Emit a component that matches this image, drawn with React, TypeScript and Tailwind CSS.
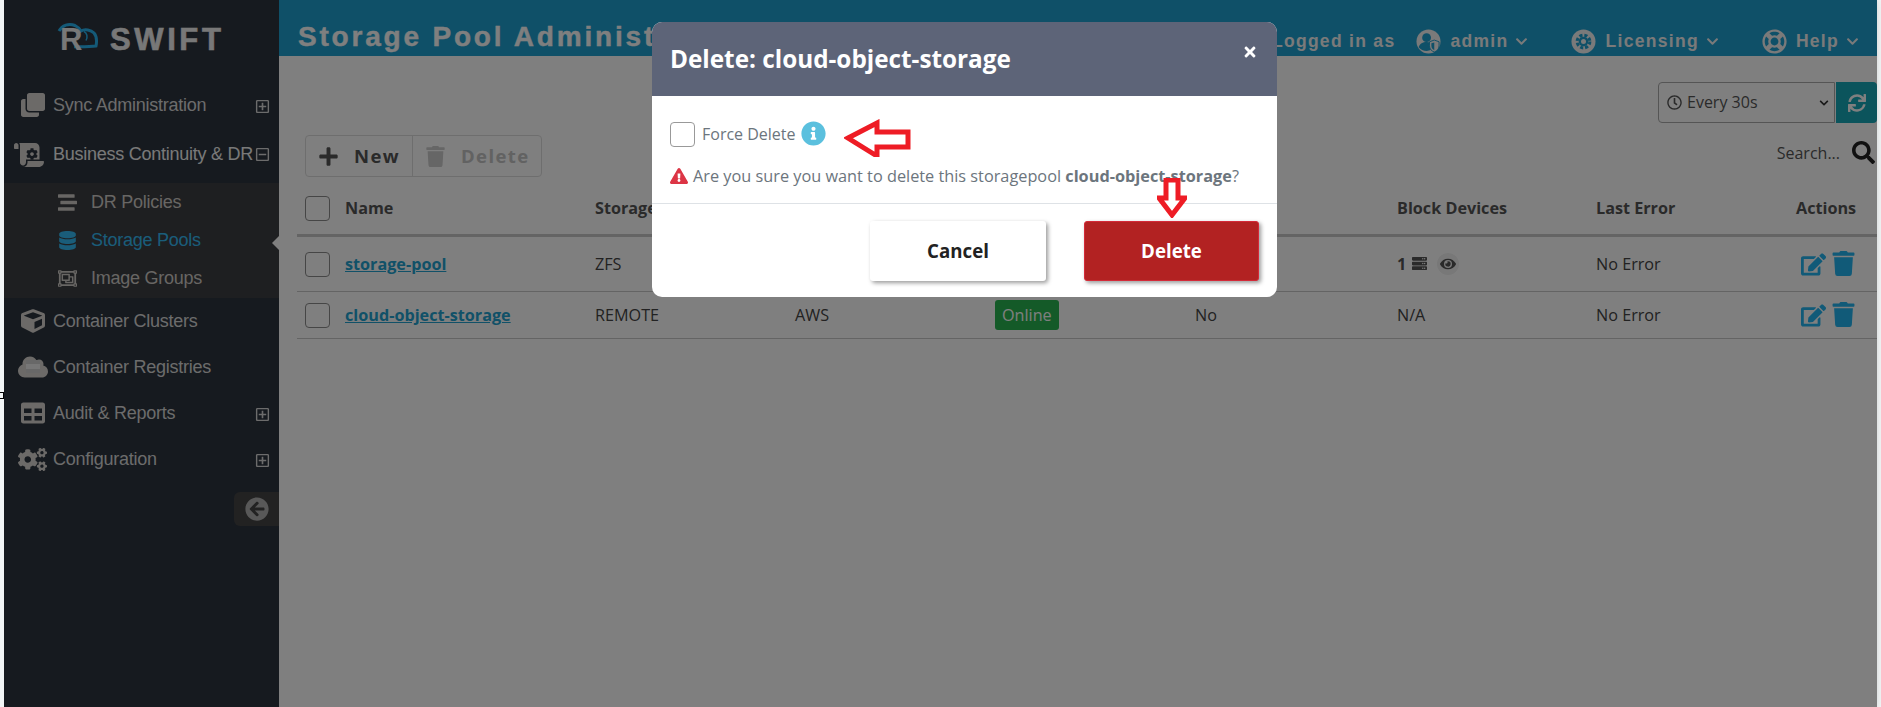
import React from "react";
import {
  FaClone, FaScroll, FaCog, FaStream, FaDatabase, FaRegObjectGroup, FaCube, FaCloud, FaTable, FaCogs,
  FaRegPlusSquare, FaRegMinusSquare, FaArrowCircleLeft, FaChevronDown, FaRegLifeRing, FaSync, FaSearch,
  FaRegClock, FaPlus, FaTrash, FaEdit, FaEye, FaServer, FaInfoCircle, FaExclamationTriangle, FaTimes,
} from "react-icons/fa";

function AdminIcon() {
  return (
    <svg viewBox="0 0 26 26" className="w-[25px] h-[25px]">
      <circle cx="13" cy="13" r="12.5" fill="#f4f4f4" />
      <circle cx="11" cy="9" r="4.6" fill="#1ea0d0" />
      <path d="M2.8 19c1-4 4.4-5.6 8.2-5.6 1.6 0 3 .3 4.2.9v7.6c-1 .5-2.400.9-4 .9-3.500 0-6.500-1.500-8.400-3.800z" fill="#1ea0d0" />
      <path d="M19 11.500l5 1.800v4.200c0 3.400-2.300 5.400-5 6.500-2.700-1.100-5-3.100-5-6.500v-4.200z" fill="#f4f4f4" stroke="#1ea0d0" strokeWidth="1" />
      <path d="M19 14v8c-1.800-.9-3-2.300-3-4.500v-2.600z" fill="#1ea0d0" />
    </svg>
  );
}

function LicensingIcon() {
  return (
    <svg viewBox="0 0 26 26" className="w-[25px] h-[25px]">
      <circle cx="13" cy="13" r="12.500" fill="#f4f4f4" />
      <circle cx="13" cy="13" r="6.600" fill="none" stroke="#1ea0d0" strokeWidth="3.200" strokeDasharray="3.200 2" />
      <circle cx="13" cy="13" r="5" fill="#1ea0d0" />
      <circle cx="13" cy="13" r="2.600" fill="#f4f4f4" />
    </svg>
  );
}

function LogoCloud() {
  return (
    <svg viewBox="0 0 44 28" className="w-[44px] h-[28px]" fill="none">
      <path d="M3 9C6 3 13 1 19 3.500 22 5 24 7 25 9c4-2.500 10-1 13 2 3 3.500 3 8 2 13-6 1-14 .8-22 .8" stroke="#28b4f0" strokeWidth="3" />
      <path d="M28 9.500c3 1.500 4 5.500 2 9" stroke="#28b4f0" strokeWidth="1.500" />
    </svg>
  );
}

const navTop = [
  { label: "Sync Administration", icon: <FaClone className="text-[24px]" />, tree: "plus", h: "h-[46px]" },
  { label: "Business Continuity & DR", icon: <span className="relative flex ml-[-3px]"><FaScroll className="text-[30px] ml-[-4px]" /><FaCog className="absolute left-[8px] top-[8px] text-[12px] text-[#2c343e]" /></span>, tree: "minus", h: "h-[55px] pb-[2px]", active: true },
];
const navSub = [
  { label: "DR Policies", icon: <FaStream className="text-[19px]" /> },
  { label: "Storage Pools", icon: <FaDatabase className="text-[19px]" />, active: true },
  { label: "Image Groups", icon: <FaRegObjectGroup className="text-[19px]" /> },
];
const navBottom = [
  { label: "Container Clusters", icon: <FaCube className="text-[24px]" />, tree: "" },
  { label: "Container Registries", icon: <span className="relative flex"><FaCloud className="text-[30px] ml-[-3px]" /><span className="absolute left-[5px] top-[8px] w-[14px] h-[13px] bg-[#eeeeee] border-y-[4px] border-[#d0d0d0]" /></span>, tree: "" },
  { label: "Audit & Reports", icon: <FaTable className="text-[24px]" />, tree: "plus" },
  { label: "Configuration", icon: <FaCogs className="text-[29px] ml-[-3px]" />, tree: "plus" },
];

function NavRow({ item, h }: { item: any; h: string }) {
  return (
    <div className={`flex items-center ${h} pl-[17px] pr-[9px] ${item.active ? "text-[#f2f2f2]" : "text-[#d8d8d8]"}`}>
      <span className="w-[32px] flex items-center shrink-0 text-[#d8d4d0]">{item.icon}</span>
      <span className="text-[18px] tracking-[-0.25px] whitespace-nowrap flex-1">{item.label}</span>
      {item.tree === "plus" && <FaRegPlusSquare className="text-[15px] text-[#d8d8d8] mt-[2px]" />}
      {item.tree === "minus" && <FaRegMinusSquare className="text-[15px] text-[#d8d8d8]" />}
    </div>
  );
}

function Sidebar() {
  return (
    <aside className="relative w-[275px] shrink-0 bg-[#2c343e] font-['Liberation_Sans',sans-serif]">
      <div className="h-[82px] flex items-start pt-[20px] pl-[52px]">
        <div className="flex items-start text-[#f0f0f0] font-bold">
          <span className="relative flex items-center h-[30px] w-[48px]">
            <span className="absolute left-[0px] top-[2px]"><LogoCloud /></span>
            <span className="relative text-[31px] leading-[30px] mt-[9px] ml-[4px]">R</span>
          </span>
          <span className="ml-[6px] mt-[3px] text-[31px] leading-[34px] tracking-[3.600px] [-webkit-text-stroke:0.6px_#f0f0f0]">SWIFT</span>
        </div>
      </div>
      {navTop.map((n) => <NavRow key={n.label} item={n} h={n.h} />)}
      <div className="bg-[#3c3e42] pb-[1px]">
        {navSub.map((n) => (
          <div key={n.label} className={`flex items-center h-[38px] pl-[54px] ${n.active ? "text-[#34bbf4]" : "text-[#d0ccc8]"}`}>
            <span className="w-[33px] flex shrink-0">{n.icon}</span>
            <span className="text-[18px] tracking-[-0.25px]">{n.label}</span>
          </div>
        ))}
      </div>
      {navBottom.map((n) => <NavRow key={n.label} item={n} h="h-[46px]" />)}
      <div className="flex justify-end mt-[10px]">
        <div className="w-[45px] h-[34px] bg-[#444444] rounded-l-[6px] flex items-center pl-[11px]">
          <FaArrowCircleLeft className="text-[24px] text-[#b0b0b0]" />
        </div>
      </div>
      <span className="absolute right-0 top-[236px] w-0 h-0 border-y-[7px] border-y-transparent border-r-[7px] border-r-white" />
    </aside>
  );
}

function HeaderLink({ icon, label, className }: { icon: React.ReactNode; label: string; className: string }) {
  return (
    <div className={`flex items-center ${className}`}>
      {icon}
      <span className="ml-[9px] tracking-[1.300px]">{label}</span>
      <FaChevronDown className="ml-[7px] text-[13px]" />
    </div>
  );
}

function TopBar() {
  return (
    <header className="h-[56px] bg-[#1ea0d0] flex items-end pb-[3px] pl-[19px] pr-[18px] font-['Liberation_Sans',sans-serif] font-bold text-white">
      <h1 className="text-[28px] leading-[40px] tracking-[2.800px] whitespace-nowrap mb-[-4px] [-webkit-text-stroke:0.4px_#ffffff]">Storage Pool Administration</h1>
      <div className="ml-auto flex items-center h-[34px] mb-[-5px] text-[17.5px] text-[#f4f4f4]">
        <span className="tracking-[1.300px] mr-[21px]">Logged in as</span>
        <HeaderLink icon={<AdminIcon />} label="admin" className="mr-[43px]" />
        <HeaderLink icon={<LicensingIcon />} label="Licensing" className="mr-[43px]" />
        <HeaderLink icon={<FaRegLifeRing className="text-[25px]" />} label="Help" className="" />
      </div>
    </header>
  );
}

const grid = "grid grid-cols-[298px_200px_200px_200px_202px_199px_200px_1fr] items-center";

function Box() {
  return <span className="w-[25px] h-[25px] border border-[#8c8c8c] rounded-[4px] bg-white shrink-0" />;
}

function RowActions() {
  return (
    <div className="flex items-center text-[#22b4f0] pl-[5px] gap-[5px]">
      <FaEdit className="text-[25px]" />
      <FaTrash className="text-[25px] mb-[2px]" />
    </div>
  );
}

function Table() {
  return (
    <div className="ml-[18px] mt-[5px] text-[16.2px] text-[#444444]">
      <div className={`${grid} h-[55px] pt-[1px] border-b-[3px] border-[#c8c8c8] font-bold text-[#555555]`}>
        <div className="flex items-center pl-[8px] gap-[15px]"><Box />Name</div>
        <div>Storage Type</div>
        <div />
        <div />
        <div />
        <div>Block Devices</div>
        <div>Last Error</div>
        <div>Actions</div>
      </div>
      <div className={`${grid} h-[55px] border-b border-[#c8c8c8]`}>
        <div className="flex items-center pl-[8px] gap-[15px]"><Box /><a className="font-bold underline text-[#22a2d0]">storage-pool</a></div>
        <div>ZFS</div>
        <div />
        <div />
        <div />
        <div className="flex items-center font-bold text-[#555555]">
          1<FaServer className="ml-[6px] text-[15px]" />
          <span className="ml-[10px] w-[22px] h-[22px] rounded-full flex items-center justify-center bg-[#f0f0f0]"><FaEye className="text-[16px]" /></span>
        </div>
        <div>No Error</div>
        <RowActions />
      </div>
      <div className={`${grid} h-[47px] border-b border-[#c8c8c8]`}>
        <div className="flex items-center pl-[8px] gap-[15px]"><Box /><a className="font-bold underline text-[#22a2d0]">cloud-object-storage</a></div>
        <div>REMOTE</div>
        <div>AWS</div>
        <div><span className="inline-block px-[7px] py-[3px] rounded-[3px] bg-[#28b451] text-white">Online</span></div>
        <div>No</div>
        <div>N/A</div>
        <div>No Error</div>
        <RowActions />
      </div>
    </div>
  );
}

function Main() {
  return (
    <main className="flex-1 min-w-0 bg-white shadow-[-4px_0_10px_rgba(0,0,0,0.35)] font-['Open_Sans',sans-serif]">
      <TopBar />
      <div className="flex justify-end pt-[26px]">
        <div className="w-[177px] h-[41px] border border-[#aaaaaa] rounded-l-[4px] flex items-center pl-[8px] pr-[5px] text-[16px] text-[#555555]">
          <FaRegClock className="text-[15px]" />
          <span className="ml-[5px] mb-[1px]">Every 30s</span>
          <FaChevronDown className="ml-auto text-[10px] text-[#333333]" />
        </div>
        <div className="w-[41px] h-[41px] ml-px bg-[#16a8b8] rounded-r-[4px] flex items-center justify-center text-white">
          <FaSync className="text-[18px]" />
        </div>
      </div>
      <div className="flex items-center justify-between mt-[12px] pl-[26px]">
        <div className="flex h-[42px] border border-[#dddddd] rounded-[4px] text-[18.5px] font-bold tracking-[1.400px]">
          <div className="w-[107px] flex items-center pl-[12px] text-[#555555] border-r border-[#dddddd]">
            <FaPlus className="text-[21px]" /><span className="ml-[15px]">New</span>
          </div>
          <div className="w-[128px] flex items-center pl-[12px] text-[#c4c4c4]">
            <FaTrash className="text-[21px] text-[#cccccc]" /><span className="ml-[15px]">Delete</span>
          </div>
        </div>
        <div className="flex items-center mt-[-7px]">
          <span className="text-[16px] text-[#555555]">Search...</span>
          <FaSearch className="ml-[12px] mr-[2px] text-[23px] text-[#222222]" />
        </div>
      </div>
      <Table />
    </main>
  );
}

function RedArrows() {
  return (
    <>
      <svg viewBox="0 0 68 38" className="absolute left-[844px] top-[119px] w-[68px] h-[38px]" fill="none">
        <path d="M4 19L33 4v9h31v15H33v9z" stroke="#ee1c25" strokeWidth="5" fill="white" />
      </svg>
      <svg viewBox="0 0 30 40" className="absolute left-[1157px] top-[178px] w-[30px] h-[40px]" fill="none">
        <path d="M9 2h12v18h7L15 37 2 20h7z" stroke="#ee1c25" strokeWidth="5" fill="white" />
      </svg>
    </>
  );
}

function Modal() {
  return (
    <div className="absolute left-[652px] top-[22px] w-[625px] h-[275px] bg-white rounded-[10px] overflow-hidden font-['Open_Sans',sans-serif]">
      <div className="h-[74px] bg-[#5d6478] flex items-center justify-between pl-[18px] pr-[19px] text-white">
        <h2 className="text-[24.3px] font-bold leading-none">Delete: cloud-object-storage</h2>
        <FaTimes className="text-[16px] mb-[15px]" />
      </div>
      <div className="h-[108px] border-b border-[#dee2e6] pt-[26px] pl-[18px] text-[16px] text-[#6c757d]">
        <div className="flex items-center h-[25px]">
          <span className="w-[25px] h-[25px] border border-[#999999] rounded-[4px] shrink-0" />
          <span className="ml-[7px] mb-[1px]">Force Delete</span>
          <FaInfoCircle className="ml-[5px] text-[25px] text-[#5bc0de] mb-[2px]" />
        </div>
        <div className="flex items-center mt-[16px] h-[26px]">
          <FaExclamationTriangle className="text-[18px] text-[#dc3545]" />
          <span className="ml-[5px] whitespace-nowrap text-[16.3px]">Are you sure you want to delete this storagepool <b>cloud-object-storage</b>?</span>
        </div>
      </div>
      <div className="flex justify-end gap-[38px] pt-[17px] pr-[18px] text-[18.7px] font-bold">
        <button className="w-[176px] h-[60px] bg-white text-[#222222] rounded-[3px] shadow-[2px_2px_4px_rgba(0,0,0,0.4)]">Cancel</button>
        <button className="w-[175px] h-[60px] bg-[#b22222] border border-[#d42a38] text-white rounded-[3px] shadow-[2px_2px_4px_rgba(0,0,0,0.4)]">Delete</button>
      </div>
    </div>
  );
}

export default function App() {
  return (
    <div className="relative w-[1881px] h-[707px] overflow-hidden bg-[#f2f5f6] px-[4px]">
      <div className="flex h-full">
        <Sidebar />
        <Main />
      </div>
      <span className="absolute left-0 top-[392px] w-[4px] h-[7px] border border-black border-l-0" />
      <div className="absolute left-[4px] right-[4px] top-0 bottom-0 bg-black/50" />
      <Modal />
      <RedArrows />
    </div>
  );
}
